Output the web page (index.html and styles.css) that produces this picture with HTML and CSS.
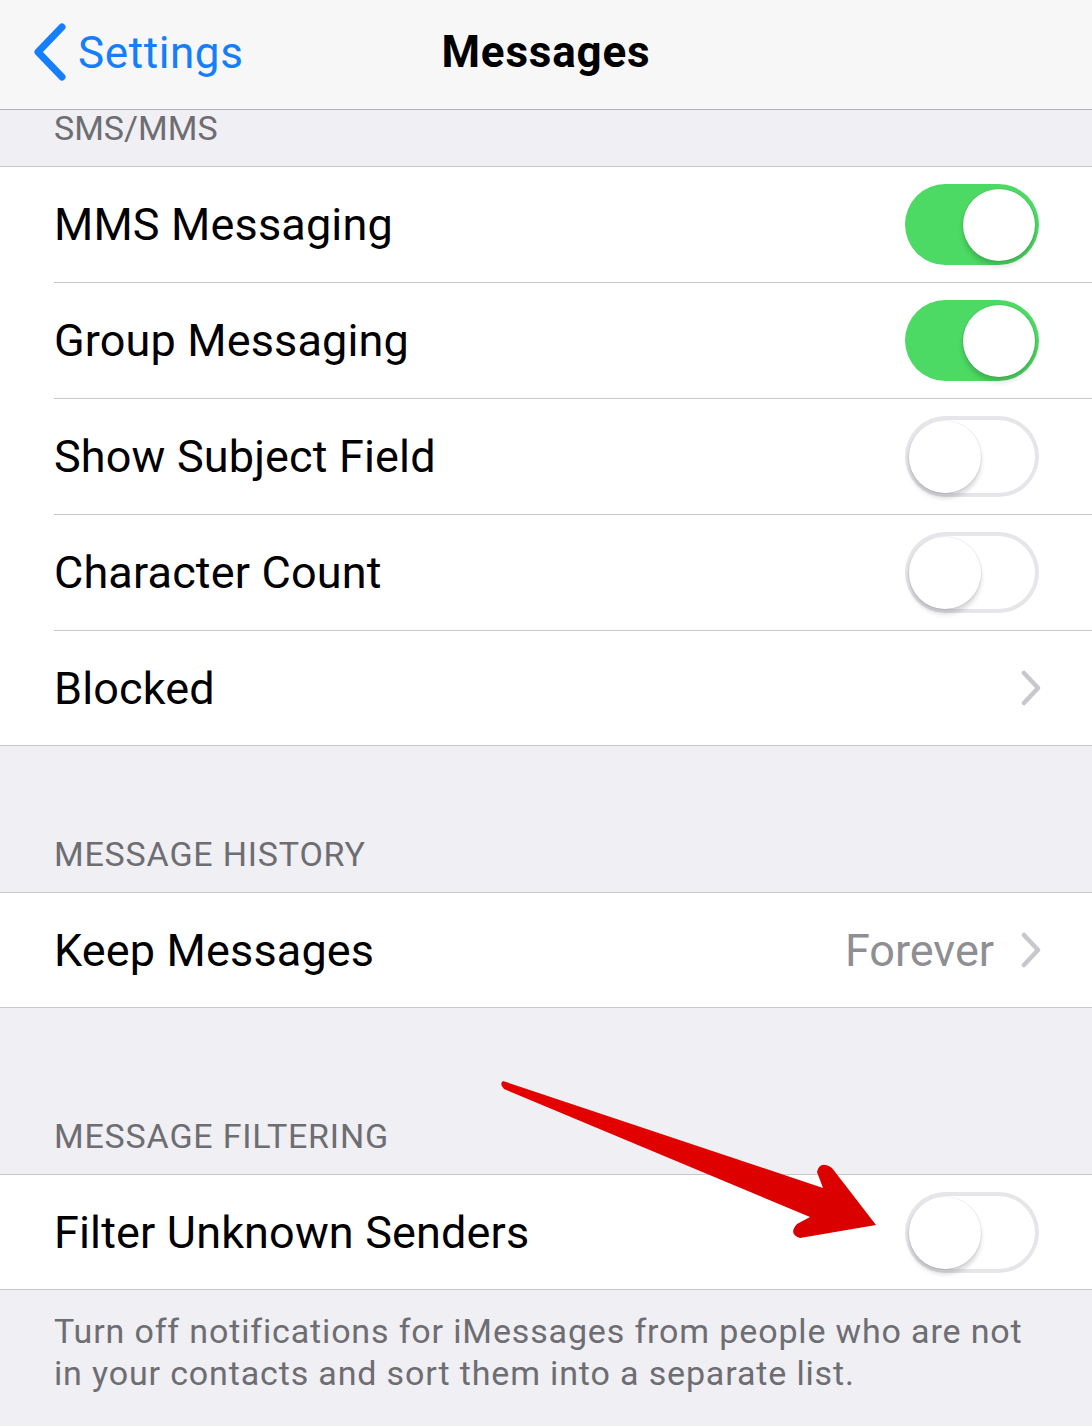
FILE: index.html
```html
<!DOCTYPE html>
<html lang="en">
<head>
<meta charset="utf-8">
<title>Messages</title>
<link rel="stylesheet" href="styles.css">
</head>
<body>
<div class="screen">
  <header class="navbar">
    <a class="back" href="#">
      <svg class="back-chevron" width="40" height="60" viewBox="0 0 40 60"><polyline points="32,4 8,29 32,54" fill="none" stroke="#147efb" stroke-width="7" stroke-linecap="round" stroke-linejoin="round"/></svg>
      <span>Settings</span>
    </a>
    <h1 class="title">Messages</h1>
    <div class="nav-spacer"></div>
  </header>

  <div class="section-header sh-first">SMS/MMS</div>
  <div class="group">
    <div class="row"><span class="label">MMS Messaging</span><span class="switch on"><span class="knob"></span></span></div>
    <div class="row"><span class="label">Group Messaging</span><span class="switch on"><span class="knob"></span></span></div>
    <div class="row"><span class="label">Show Subject Field</span><span class="switch"><span class="knob"></span></span></div>
    <div class="row"><span class="label">Character Count</span><span class="switch"><span class="knob"></span></span></div>
    <div class="row"><span class="label">Blocked</span><span class="detail"><svg class="chev" width="22" height="36" viewBox="0 0 22 36"><polyline points="4,3 18,18 4,33" fill="none" stroke="#c7c7cc" stroke-width="4.5" stroke-linecap="round" stroke-linejoin="round"/></svg></span></div>
  </div>

  <div class="section-header sh-history">MESSAGE HISTORY</div>
  <div class="group">
    <div class="row"><span class="label">Keep Messages</span><span class="detail"><span class="value">Forever</span><svg class="chev" width="22" height="36" viewBox="0 0 22 36"><polyline points="4,3 18,18 4,33" fill="none" stroke="#c7c7cc" stroke-width="4.5" stroke-linecap="round" stroke-linejoin="round"/></svg></span></div>
  </div>

  <div class="section-header sh-filter">MESSAGE FILTERING</div>
  <div class="group">
    <div class="row"><span class="label">Filter Unknown Senders</span><span class="switch"><span class="knob"></span></span></div>
  </div>
  <p class="footer">Turn off notifications for iMessages from people who are not in your contacts and sort them into a separate list.</p>

  <svg class="arrow" width="1092" height="1426" viewBox="0 0 1092 1426">
    <defs>
      <linearGradient id="ag" x1="0" y1="0" x2="1" y2="1">
        <stop offset="0" stop-color="#e60000"/>
        <stop offset="1" stop-color="#d90000"/>
      </linearGradient>
    </defs>
    <path d="M 503 1081 Q 499 1084 504 1089 L 810 1217 L 797 1224 Q 788 1234 800 1238 L 876 1225 L 832 1168 Q 820 1160 817 1172 L 823 1188 Z" fill="url(#ag)"/>
  </svg>
</div>
</body>
</html>
```

FILE: styles.css
```css
html, body {
  margin: 0;
  padding: 0;
}
body {
  background: #efeff4;
  font-family: Roboto, "Noto Sans", "Liberation Sans", sans-serif;
  color: #000;
}
.screen {
  position: relative;
  width: 1092px;
  min-height: 1426px;
  overflow: hidden;
}
.navbar {
  height: 109px;
  background: #f7f7f7;
  border-bottom: 1px solid #b2b2b2;
  display: grid;
  grid-template-columns: 1fr auto 1fr;
  align-items: center;
}
.back {
  display: flex;
  align-items: center;
  gap: 8px;
  padding-left: 30px;
  color: #147efb;
  text-decoration: none;
  font-size: 44px;
  letter-spacing: 0.6px;
  margin-top: -4px;
}
.back-chevron {
  display: block;
}
.title {
  margin: 0;
  font-size: 44px;
  font-weight: 700;
  letter-spacing: 0.8px;
  margin-top: -6px;
}
.section-header {
  display: flex;
  align-items: flex-end;
  padding-left: 54px;
  padding-bottom: 17px;
  box-sizing: border-box;
  font-size: 34px;
  line-height: 42px;
  letter-spacing: 0.8px;
  color: #6d6d72;
  border-bottom: 1px solid #c8c7cc;
}
.sh-first { height: 57px; letter-spacing: 0; }
.sh-history { height: 147px; }
.sh-filter { height: 167px; }
.group {
  background: #fff;
  border-bottom: 1px solid #c8c7cc;
}
.row {
  height: 115px;
  margin-left: 54px;
  padding-right: 53px;
  display: flex;
  align-items: center;
  justify-content: space-between;
  border-bottom: 1px solid #c8c7cc;
}
.row:last-child {
  border-bottom: none;
  height: 114px;
}
.label {
  font-size: 45px;
  letter-spacing: 0.15px;
}
.detail {
  display: flex;
  align-items: center;
  gap: 26px;
  margin-right: -3px;
}
.value {
  font-size: 45px;
  color: #8e8e93;
}
.chev { display: block; }
.switch {
  position: relative;
  width: 134px;
  height: 81px;
  border-radius: 41px;
  box-sizing: border-box;
  background: #fff;
  box-shadow: inset 0 0 0 4px #e5e5ea;
}
.switch.on {
  background: #4cd964;
  box-shadow: none;
}
.knob {
  position: absolute;
  top: 5px;
  left: 4px;
  width: 72px;
  height: 72px;
  border-radius: 50%;
  background: #fff;
  box-shadow: 0 5px 5px rgba(0,0,0,0.16), 0 0 0 1px rgba(0,0,0,0.06);
}
.switch.on .knob {
  left: auto;
  right: 4px;
}
.footer {
  margin: 0;
  padding: 20px 54px 28px 54px;
  font-size: 34px;
  line-height: 42px;
  letter-spacing: 0.85px;
  color: #6d6d72;
}
.arrow {
  position: absolute;
  left: 0;
  top: 0;
  pointer-events: none;
}
```
